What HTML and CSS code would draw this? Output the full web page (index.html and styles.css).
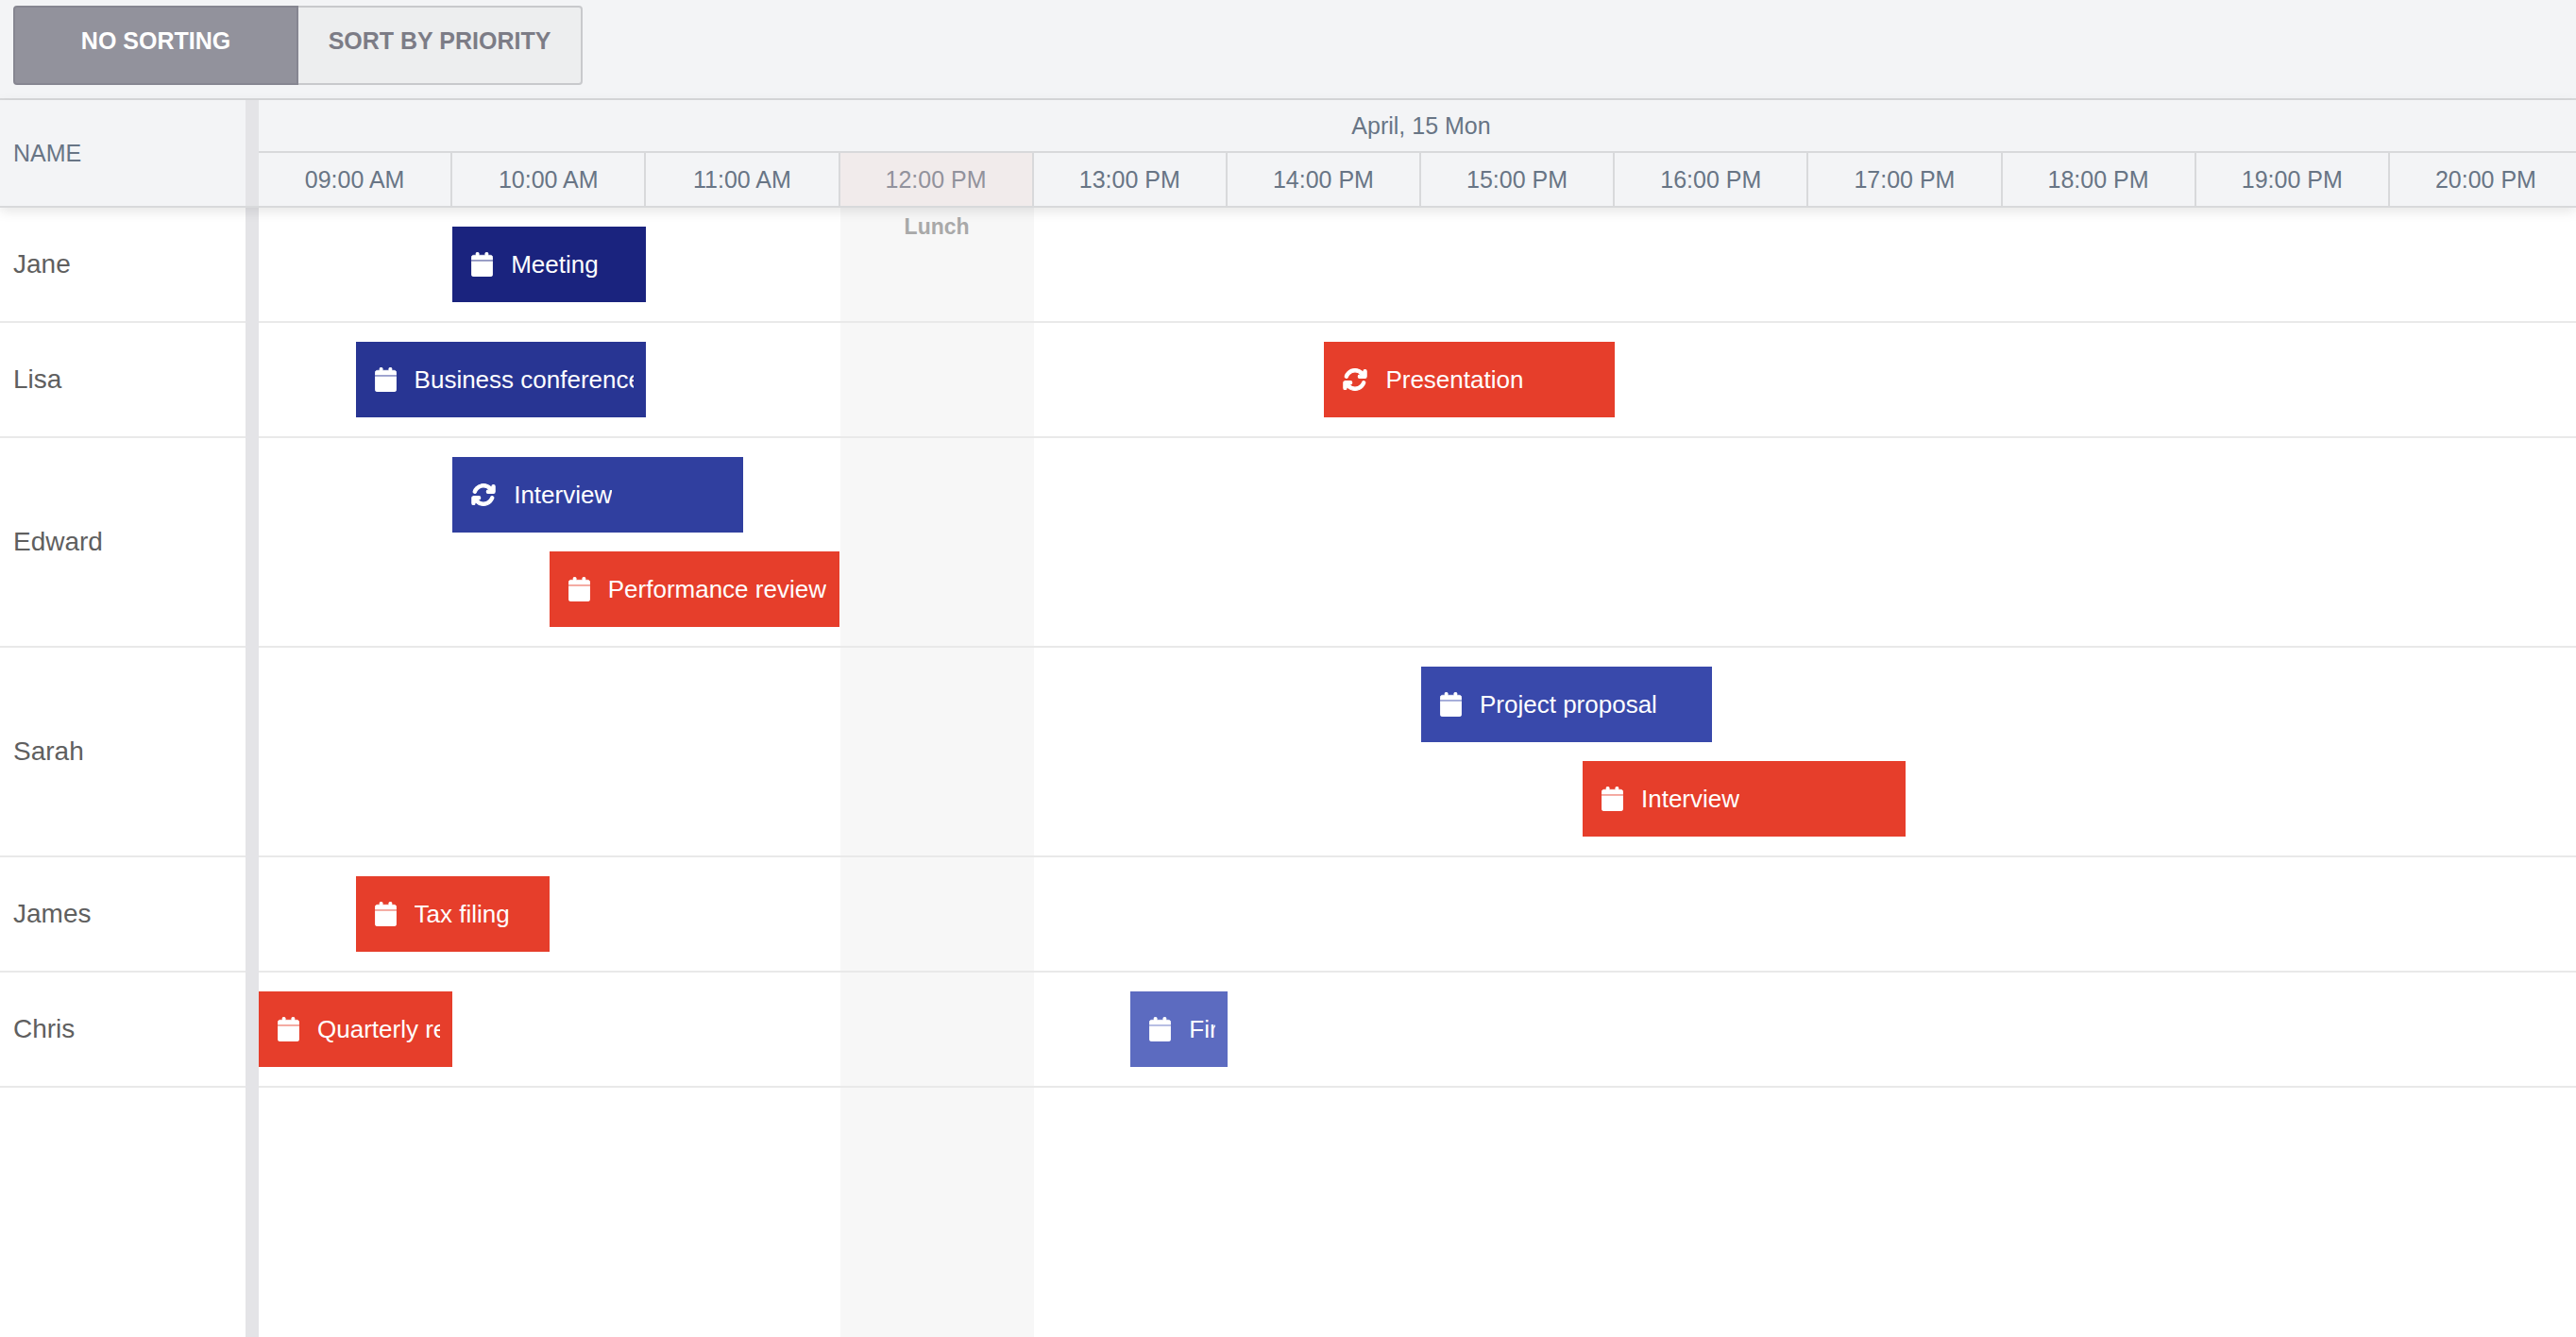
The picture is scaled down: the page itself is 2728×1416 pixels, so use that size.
FILE: index.html
```html
<!DOCTYPE html>
<html lang="en">
<head>
<meta charset="utf-8">
<title>Schedule</title>
<link rel="stylesheet" href="styles.css">
</head>
<body>
<svg class="sprite" aria-hidden="true">
  <symbol id="calendar" viewBox="0 0 448 512"><path stroke="currentColor" stroke-width="12" d="M96 32V64H48C21.500 64 0 85.500 0 112v48H448V112c0-26.500-21.500-48-48-48H352V32c0-17.700-14.300-32-32-32s-32 14.300-32 32V64H160V32c0-17.700-14.300-32-32-32S96 14.300 96 32zM448 192H0V464c0 26.500 21.500 48 48 48H400c26.500 0 48-21.500 48-48V192z"/></symbol>
  <symbol id="repeat" viewBox="0 0 512 512"><path stroke="currentColor" stroke-width="22" d="M105.100 202.600c7.700-21.800 20.200-42.300 37.800-59.800c62.500-62.500 163.800-62.500 226.300 0L386.300 160H352c-17.700 0-32 14.300-32 32s14.300 32 32 32H463.500c17.700 0 32-14.300 32-32V80c0-17.700-14.300-32-32-32s-32 14.300-32 32v35.200L414.400 97.600c-87.500-87.500-229.300-87.500-316.800 0C73.200 122 55.600 150.700 44.800 181.400c-5.900 16.700 2.900 34.900 19.500 40.800s34.900-2.900 40.800-19.500zM39 289.300c-5 1.500-9.800 4.200-13.700 8.200c-4 4-6.700 8.800-8.100 14c-.3 1.200-.6 2.500-.8 3.800c-.3 1.700-.4 3.400-.4 5.100V432c0 17.700 14.300 32 32 32s32-14.300 32-32V396.900l17.600 17.500c87.500 87.400 229.300 87.400 316.700 0c24.400-24.400 42.100-53.100 52.900-83.700c5.900-16.700-2.900-34.900-19.500-40.800s-34.900 2.900-40.800 19.500c-7.700 21.800-20.200 42.300-37.800 59.800c-62.500 62.500-163.800 62.500-226.300 0l-.1-.1L125.600 352H160c17.700 0 32-14.300 32-32s-14.300-32-32-32H48.400c-1.600 0-3.200 .1-4.800 .3s-3.100 .5-4.600 1z"/></symbol>
</svg>
<div class="toolbar">
  <div class="segmented" role="group" aria-label="Sorting">
    <button class="segment active" type="button" aria-pressed="true">NO SORTING</button>
    <button class="segment" type="button" aria-pressed="false">SORT BY PRIORITY</button>
  </div>
</div>
<main class="scheduler">
  <header class="head">
    <div class="head-name">NAME</div>
    <div class="splitter"></div>
    <div class="viewport">
      <div class="scale">
        <div class="day">April, 15 Mon</div>
        <div class="hours">
          <div class="hour">09:00 AM</div>
          <div class="hour">10:00 AM</div>
          <div class="hour">11:00 AM</div>
          <div class="hour off">12:00 PM</div>
          <div class="hour">13:00 PM</div>
          <div class="hour">14:00 PM</div>
          <div class="hour">15:00 PM</div>
          <div class="hour">16:00 PM</div>
          <div class="hour">17:00 PM</div>
          <div class="hour">18:00 PM</div>
          <div class="hour">19:00 PM</div>
          <div class="hour">20:00 PM</div>
        </div>
      </div>
    </div>
  </header>
  <div class="body">
    <div class="names">
      <div class="name">Jane</div>
      <div class="name">Lisa</div>
      <div class="name double">Edward</div>
      <div class="name double">Sarah</div>
      <div class="name">James</div>
      <div class="name">Chris</div>
    </div>
    <div class="splitter"></div>
    <div class="viewport">
      <div class="timeline">
        <div class="zone"><div class="lunch">Lunch</div></div>
        <div class="row">
          <div class="event c1" style="grid-column: 7 / 13"><svg class="icon"><use href="#calendar"/></svg><span class="label">Meeting</span></div>
        </div>
        <div class="row">
          <div class="event c2" style="grid-column: 4 / 13"><svg class="icon"><use href="#calendar"/></svg><span class="label">Business conference</span></div>
          <div class="event red" style="grid-column: 34 / 43"><svg class="icon wide"><use href="#repeat"/></svg><span class="label">Presentation</span></div>
        </div>
        <div class="row double">
          <div class="event c3" style="grid-column: 7 / 16"><svg class="icon wide"><use href="#repeat"/></svg><span class="label">Interview</span></div>
          <div class="event red second" style="grid-column: 10 / 19"><svg class="icon"><use href="#calendar"/></svg><span class="label">Performance review</span></div>
        </div>
        <div class="row double">
          <div class="event c4" style="grid-column: 37 / 46"><svg class="icon"><use href="#calendar"/></svg><span class="label">Project proposal</span></div>
          <div class="event red second" style="grid-column: 42 / 52"><svg class="icon"><use href="#calendar"/></svg><span class="label">Interview</span></div>
        </div>
        <div class="row">
          <div class="event red" style="grid-column: 4 / 10"><svg class="icon"><use href="#calendar"/></svg><span class="label">Tax filing</span></div>
        </div>
        <div class="row">
          <div class="event red" style="grid-column: 1 / 7"><svg class="icon"><use href="#calendar"/></svg><span class="label">Quarterly review</span></div>
          <div class="event c5" style="grid-column: 28 / 31"><svg class="icon"><use href="#calendar"/></svg><span class="label">Firmware update</span></div>
        </div>
      </div>
    </div>
  </div>
</main>
</body>
</html>
```
FILE: styles.css
```css
* { box-sizing: border-box; }

body {
  margin: 0;
  min-height: 100vh;
  display: flex;
  flex-direction: column;
  overflow-x: hidden;
  background: #fff;
  font-family: "Liberation Sans", Arial, sans-serif;
  font-size: 26px;
}

.sprite { position: absolute; width: 0; height: 0; }

.toolbar {
  padding: 6px 14px 14px;
  background: #f3f4f6;
  border-bottom: 2px solid #d8d9db;
}

.segmented { display: flex; }

.segment {
  width: 301px;
  height: 84px;
  padding: 0 0 10px;
  border: 2px solid #c8c9cc;
  border-left: 0;
  border-radius: 0 4px 4px 0;
  background: #edeeef;
  color: #7c7c86;
  font: bold 25px "Liberation Sans", Arial, sans-serif;
}

.segment.active {
  width: 302px;
  border: 2px solid #868691;
  border-radius: 4px 0 0 4px;
  background: #92929c;
  color: #fff;
}

.scheduler {
  flex: 1;
  display: flex;
  flex-direction: column;
}

.head {
  position: relative;
  z-index: 1;
  display: flex;
  border-bottom: 2px solid #d8d9db;
  background: #f3f4f6;
  box-shadow: 0 4px 12px rgba(0, 0, 0, 0.1);
  color: #687585;
  font-size: 25px;
  line-height: 30px;
}

.head-name {
  width: 260px;
  padding-left: 14px;
  display: flex;
  align-items: center;
}

.splitter {
  flex: none;
  width: 14px;
  background: #e4e4e7;
}

.viewport {
  flex: 1;
  min-width: 0;
  display: flex;
  overflow: hidden;
}

/* The time scale runs slightly past the visible edge. */
.scale,
.timeline {
  flex: none;
  width: calc(100% + 8px);
}

.day {
  height: 56px;
  padding: 12px 0;
  border-bottom: 2px solid #d8d9db;
  text-align: center;
}

.hours {
  display: grid;
  grid-template-columns: repeat(12, 1fr);
}

.hour {
  height: 56px;
  padding: 13px 0;
  border-right: 2px solid #d8d9db;
  text-align: center;
}

.hour.off {
  background: #f1ebeb;
  color: #92929c;
}

.body {
  flex: 1;
  display: flex;
}

.names { width: 260px; }

.name {
  height: 122px;
  padding-left: 14px;
  display: flex;
  align-items: center;
  border-bottom: 2px solid #e9e9e9;
  color: #5f5f5f;
  font-size: 28px;
}

.name.double { height: 222px; }

.timeline { position: relative; }

.zone {
  position: absolute;
  top: 0;
  bottom: 0;
  left: 25%;
  width: calc(100% / 12);
  padding-top: 6px;
  background: #f7f7f7;
  color: #a9a9a9;
  font-size: 23px;
  font-weight: bold;
  line-height: 28px;
  text-align: center;
}

.row {
  position: relative;
  height: 122px;
  padding: 20px 0;
  display: grid;
  grid-template-columns: repeat(72, minmax(0, 1fr));
  grid-auto-rows: 80px;
  row-gap: 20px;
  border-bottom: 2px solid #e9e9e9;
}

.row.double { height: 222px; }

.event {
  grid-row: 1;
  min-width: 0;
  padding: 0 13px 0 20px;
  display: flex;
  align-items: center;
  gap: 19px;
  color: #fff;
}

.event.second { grid-row: 2; }

.label {
  min-width: 0;
  overflow: hidden;
  white-space: nowrap;
  line-height: 32px;
}

.icon {
  flex: none;
  width: 23px;
  height: 26px;
  fill: currentColor;
}

.icon.wide { width: 26px; }

.c1 { background: #1a237e; }
.c2 { background: #283593; }
.c3 { background: #303f9f; }
.c4 { background: #3949ab; }
.c5 { background: #5c6bc0; }
.red { background: #e63e2b; }
```
